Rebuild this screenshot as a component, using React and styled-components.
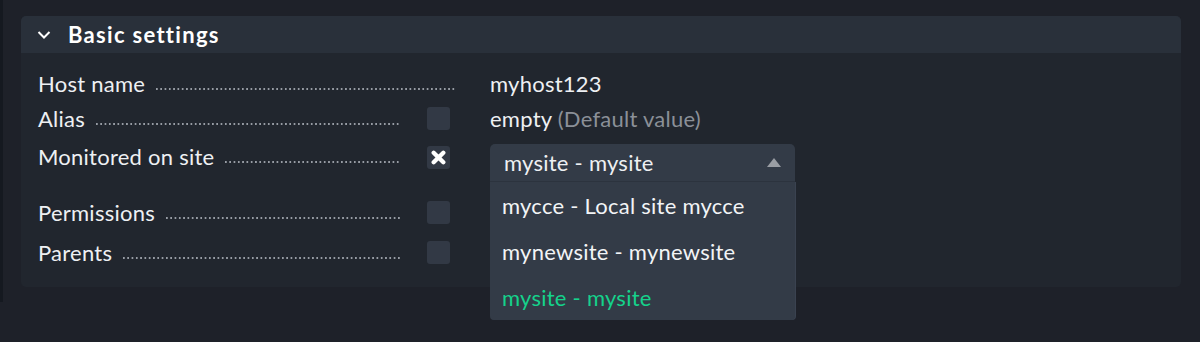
import React from "react";
import styled, { createGlobalStyle } from "styled-components";

const GlobalStyle = createGlobalStyle`
  html, body {
    margin: 0;
    padding: 0;
    background: #1e2129;
    font-family: Lato, "Noto Sans", sans-serif;
    color: #eef0f3;
  }
`;

const Page = styled.div`
  display: flex;
  height: 342px;
  overflow: hidden;
`;

const Strip = styled.div`
  width: 3px;
  height: 302px;
  background: #151920;
  flex-shrink: 0;
`;

const Main = styled.div`
  flex: 1;
  padding: 16px 19px 0 18px;
`;

const Panel = styled.section`
  background: #21262e;
  border-radius: 5px;
  height: 271px;
`;

const Header = styled.div`
  height: 37px;
  display: flex;
  align-items: center;
  background: #29303a;
  border-radius: 5px 5px 0 0;
  padding-left: 16px;
  gap: 17px;
  font-size: 22px;
  font-weight: 700;
  letter-spacing: 1.3px;
  color: #ffffff;
`;

const Body = styled.div`
  padding: 12px 0 0 17px;
  display: flex;
  flex-direction: column;
`;

const Row = styled.div`
  display: flex;
  align-items: ${(p) => p.$align || "center"};
  height: ${(p) => p.$h}px;
  margin-top: ${(p) => p.$top || 0}px;
  font-size: 22px;
  letter-spacing: 0.25px;
`;

const Label = styled.div`
  width: ${(p) => p.$w}px;
  margin-top: ${(p) => p.$top || 0}px;
  display: flex;
  align-items: baseline;
  white-space: nowrap;
`;

const Dots = styled.span`
  flex: 1;
  height: 2px;
  margin-left: 11px;
  background-image: linear-gradient(to right, #979ca4 0 2px, transparent 2px 4px);
  background-size: 4.3px 2px;
  align-self: flex-end;
  margin-bottom: 7px;
`;

const CheckCell = styled.div`
  width: 90px;
  padding-left: 27px;
  margin-top: ${(p) => p.$top || 0}px;
  box-sizing: border-box;
  display: flex;
  align-items: center;
`;

const Checkbox = styled.div`
  width: 23px;
  height: 23px;
  border-radius: 3px;
  background: #323945;
  display: flex;
  align-items: center;
  justify-content: center;
`;

const Value = styled.div`
  white-space: nowrap;
  margin-left: ${(p) => p.$offset || 0}px;
`;

const Muted = styled.span`
  color: #8b9098;
`;

const SelectWrap = styled.div`
  position: relative;
  width: 305px;
  margin-top: 9px;
  z-index: 2;
`;

const SelectBox = styled.div`
  height: 37px;
  background: #333b47;
  border-radius: 5px 5px 0 0;
  border-bottom: 1px solid #2c333e;
  display: flex;
  align-items: center;
  justify-content: space-between;
  padding: 0 14px 0 14px;
  font-size: 22px;
`;

const Caret = styled.span`
  width: 0;
  height: 0;
  border-left: 7px solid transparent;
  border-right: 7px solid transparent;
  border-bottom: 9px solid #9a9ea4;
`;

const Options = styled.ul`
  position: absolute;
  left: 0;
  top: 38px;
  width: 100%;
  margin: 0;
  padding: 0;
  list-style: none;
  background: #333b47;
  border-radius: 0 0 4px 4px;
  box-shadow: 1px 0 0 #3a4250;
`;

const Option = styled.li`
  height: 46px;
  display: flex;
  align-items: center;
  padding-left: 12px;
  font-size: 22px;
  color: ${(p) => (p.$active ? "#15d28b" : "#f2f4f6")};
`;

const Chevron = () => (
  <svg width="14" height="10" viewBox="0 0 14 10">
    <path d="M1.5 2 L7 7.5 L12.5 2" fill="none" stroke="#ffffff" strokeWidth="2" />
  </svg>
);

const Cross = () => (
  <svg width="15" height="15" viewBox="0 0 14 14">
    <path d="M2.5 2.5 L11.5 11.5 M11.5 2.5 L2.5 11.5" stroke="#ffffff" strokeWidth="4" strokeLinecap="round" />
  </svg>
);

export default function App() {
  return (
    <>
      <GlobalStyle />
      <Page>
        <Strip />
        <Main>
          <Panel>
            <Header>
              <Chevron />
              Basic settings
            </Header>
            <Body>
              <Row $h={36}>
                <Label $w={417}>
                  Host name
                  <Dots />
                </Label>
                <Value $offset={35}>myhost123</Value>
              </Row>
              <Row $h={34}>
                <Label $w={362}>
                  Alias
                  <Dots />
                </Label>
                <CheckCell>
                  <Checkbox />
                </CheckCell>
                <Value>
                  empty <Muted>(Default value)</Muted>
                </Value>
              </Row>
              <Row $h={44} $align="flex-start">
                <Label $w={362} $top={8}>
                  Monitored on site
                  <Dots />
                </Label>
                <CheckCell $top={11}>
                  <Checkbox>
                    <Cross />
                  </Checkbox>
                </CheckCell>
                <SelectWrap>
                  <SelectBox>
                    mysite - mysite
                    <Caret />
                  </SelectBox>
                  <Options>
                    <Option>mycce - Local site mycce</Option>
                    <Option>mynewsite - mynewsite</Option>
                    <Option $active>mysite - mysite</Option>
                  </Options>
                </SelectWrap>
              </Row>
              <Row $h={36} $top={15}>
                <Label $w={362}>
                  Permissions
                  <Dots />
                </Label>
                <CheckCell>
                  <Checkbox />
                </CheckCell>
              </Row>
              <Row $h={36} $top={4}>
                <Label $w={362}>
                  Parents
                  <Dots />
                </Label>
                <CheckCell>
                  <Checkbox />
                </CheckCell>
              </Row>
            </Body>
          </Panel>
        </Main>
      </Page>
    </>
  );
}
